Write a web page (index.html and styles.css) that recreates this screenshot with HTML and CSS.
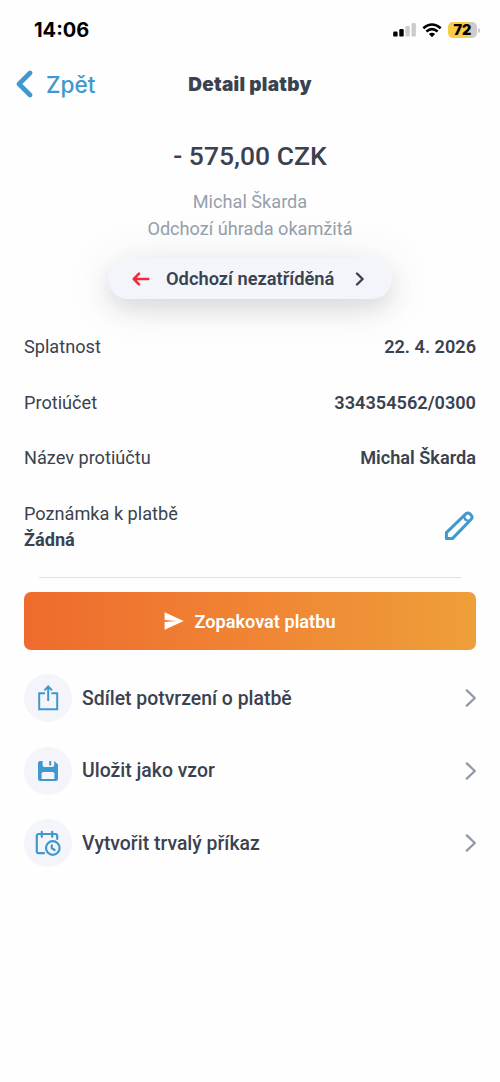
FILE: index.html
```html
<!DOCTYPE html>
<html lang="cs">
<head>
<meta charset="utf-8">
<meta name="viewport" content="width=device-width, initial-scale=1">
<title>Detail platby</title>
<link rel="stylesheet" href="styles.css">
</head>
<body>
<div class="screen">
  <div class="status">
    <span class="clock">14:06</span>
    <div class="indicators">
      <svg class="signal" width="24" height="14" viewBox="0 0 24 14">
        <rect x="0.2" y="8.6" width="4.4" height="5" rx="1.2" fill="#000"/>
        <rect x="6.3" y="6" width="4.4" height="7.6" rx="1.2" fill="#000"/>
        <rect x="12.4" y="3" width="4.4" height="10.6" rx="1.2" fill="#ccc"/>
        <rect x="18.5" y="0" width="4.4" height="13.6" rx="1.2" fill="#ccc"/>
      </svg>
      <svg class="wifi" width="20" height="15" viewBox="0 0 20 15" fill="none" stroke="#000" stroke-width="2.6">
        <path d="M1.3 5.2Q10 -2.2 18.7 5.2"/>
        <path d="M4.4 8.6Q10 3.8 15.6 8.6"/>
        <path d="M10 14.2L6.9 11.1Q10 8.5 13.1 11.1Z" fill="#000" stroke="none"/>
      </svg>
      <div class="battery"><span class="level">72</span></div>
      <span class="battery-tip"></span>
    </div>
  </div>

  <header class="nav">
    <a class="back">
      <svg width="18" height="28" viewBox="0 0 18 28" fill="none" stroke="#4198cf" stroke-width="4.6" stroke-linecap="round" stroke-linejoin="round"><path d="M15 3L4 14L15 25"/></svg>
      <span>Zpět</span>
    </a>
    <h1 class="title">Detail platby</h1>
  </header>

  <section class="summary">
    <div class="amount">- 575,00 CZK</div>
    <div class="party">Michal Škarda</div>
    <div class="kind">Odchozí úhrada okamžitá</div>
    <button class="category">
      <svg width="18" height="14" viewBox="0 0 18 14" fill="none" stroke="#ee2b3b" stroke-width="2.5" stroke-linecap="round" stroke-linejoin="round"><path d="M16.3 7H1.8M7 1.7L1.8 7L7 12.3"/></svg>
      <span class="category-name">Odchozí nezatříděná</span>
      <svg class="category-more" width="10" height="14" viewBox="0 0 10 14" fill="none" stroke="#3a4250" stroke-width="2.4" stroke-linecap="round" stroke-linejoin="round"><path d="M2 1.5L7.6 7L2 12.5"/></svg>
    </button>
  </section>

  <dl class="details">
    <div class="row"><dt>Splatnost</dt><dd>22. 4. 2026</dd></div>
    <div class="row"><dt>Protiúčet</dt><dd>334354562/0300</dd></div>
    <div class="row"><dt>Název protiúčtu</dt><dd>Michal Škarda</dd></div>
  </dl>

  <div class="note">
    <div>
      <div class="note-label">Poznámka k platbě</div>
      <div class="note-value">Žádná</div>
    </div>
    <svg width="30" height="30" viewBox="0 0 30 30" fill="none" stroke="#4198cf" stroke-width="3" stroke-linejoin="round"><path d="M2.4 27.6V21.6L21.8 2.8Q23.9 1.2 25.8 2.9L27.2 4.3Q28.9 6.2 27.2 8.2L8.4 27.6Z"/><path d="M20.1 4.8Q20.2 9.8 25.2 9.9" stroke-width="2.4"/></svg>
  </div>

  <hr class="divider">

  <button class="repeat">
    <svg width="20" height="18" viewBox="0 0 20 18" fill="#fff"><path d="M0.6 0.3L19.7 9L0.6 17.7V10L13 9L0.6 8Z"/></svg>
    <span>Zopakovat platbu</span>
  </button>

  <nav class="actions">
    <a class="action">
      <span class="badge"><svg width="22" height="26" viewBox="0 0 22 26" fill="none" stroke="#4198cf" stroke-width="2"><path d="M8 8.3H2.2V24.2H20.2V8.3H14.4"/><path d="M11.2 16V1.7M7.4 5.4L11.2 1.5L15 5.4"/></svg></span>
      <span class="action-name">Sdílet potvrzení o platbě</span>
      <svg class="chevron" width="12" height="18" viewBox="0 0 12 18"><path d="M1.8 1.4L9.8 9L1.8 16.6"/></svg>
    </a>
    <a class="action">
      <span class="badge"><svg width="20" height="20" viewBox="0 0 20 20"><path fill="#4198cf" fill-rule="evenodd" d="M2 0H4.6V4.2Q4.6 6 6.4 6H14.4Q16.2 6 16.2 4.2V0L20 3.5V18Q20 20 18 20H2Q0 20 0 18V2Q0 0 2 0ZM5.3 11Q3.6 11 3.6 12.5V18H16.4V12.5Q16.4 11 14.7 11Z"/><rect x="11.2" y="0" width="2" height="4.5" fill="#4198cf"/></svg></span>
      <span class="action-name">Uložit jako vzor</span>
      <svg class="chevron" width="12" height="18" viewBox="0 0 12 18"><path d="M1.8 1.4L9.8 9L1.8 16.6"/></svg>
    </a>
    <a class="action">
      <span class="badge"><svg width="26" height="26" viewBox="0 0 26 26" fill="none" stroke="#4198cf" stroke-width="2.2" stroke-linecap="round" stroke-linejoin="round"><path d="M22.2 9V6Q22.2 4 20.2 4H3.8Q1.8 4 1.8 6V21.2Q1.8 23.2 3.8 23.2H9"/><path d="M6.8 1.8V6.8M17.2 1.8V6.8"/><circle cx="17.8" cy="18" r="6.8"/><path d="M16.8 15.4V18.2L19.6 20"/></svg></span>
      <span class="action-name">Vytvořit trvalý příkaz</span>
      <svg class="chevron" width="12" height="18" viewBox="0 0 12 18"><path d="M1.8 1.4L9.8 9L1.8 16.6"/></svg>
    </a>
  </nav>
</div>
</body>
</html>
```
FILE: styles.css
```css
* { box-sizing: border-box; }

body {
  margin: 0;
  background: #fefefe;
  color: #3a4250;
  font-family: Roboto, "Liberation Sans", sans-serif;
  font-size: 18.15px;
}

button { border: 0; font: inherit; color: inherit; }
svg { display: block; flex: none; }

.screen { width: 500px; height: 1082px; overflow: hidden; }

.status {
  height: 60px;
  padding: 0 23px 0 34px;
  display: flex;
  align-items: center;
  justify-content: space-between;
  color: #000;
  font-family: Inter, "Liberation Sans", sans-serif;
}
.clock { font-size: 20px; font-weight: 700; }
.indicators { display: flex; align-items: center; }
.wifi { margin-left: 5px; }
.battery {
  width: 29px;
  height: 16px;
  margin-left: 6px;
  border-radius: 5px;
  background: linear-gradient(90deg, #f8cc46 73%, #ccc 73%);
  display: flex;
  align-items: center;
  justify-content: center;
}
.level { font-size: 14.5px; font-weight: 900; line-height: 16px; }
.battery-tip { width: 2px; height: 5px; margin: 0 -3px 0 1px; border-radius: 0 2px 2px 0; background: #ccc; }

.nav {
  height: 48px;
  padding: 0 15px;
  display: grid;
  grid-template-columns: 1fr auto 1fr;
  align-items: center;
  font-family: Inter, "Liberation Sans", sans-serif;
}
.back { display: flex; align-items: center; gap: 13px; color: #4198cf; font-size: 22.6px; font-weight: 500; }
.title { margin: 0; font-size: 19px; font-weight: 900; letter-spacing: 0.25px; }

.summary {
  height: 216px;
  padding-top: 30px;
  display: flex;
  flex-direction: column;
  align-items: center;
}
.amount { font-size: 26.5px; font-weight: 500; line-height: 36px; }
.party, .kind { color: #96a0ab; line-height: 26.5px; }
.party { margin-top: 15px; }
.category {
  width: 284px;
  height: 41px;
  margin-top: 16px;
  padding: 0 27px 0 24px;
  display: flex;
  align-items: center;
  border-radius: 21px;
  background: #f3f5fa;
  box-shadow: 0 10px 22px rgba(58, 66, 80, 0.14), 0 4px 50px rgba(58, 66, 80, 0.1);
  font-size: 18.3px;
  font-weight: 600;
}
.category-name { margin-left: 16px; }
.category-more { margin-left: auto; }

.details { margin: -5px 24px 0; }
.row { height: 55.6px; display: flex; align-items: center; justify-content: space-between; }
.row dd { margin: 0; font-weight: 600; }

.note {
  height: 91px;
  padding: 15px 26px 0 24px;
  display: flex;
  justify-content: space-between;
  line-height: 26.5px;
}
.note svg { margin-top: 10px; }
.note-value { font-weight: 700; }

.divider { height: 1px; margin: 0 39px; border: 0; background: #dfe1e8; }

.repeat {
  width: 452px;
  height: 58px;
  margin: 14.4px 24px 0;
  padding: 0;
  display: flex;
  align-items: center;
  justify-content: center;
  gap: 10px;
  border-radius: 7px;
  background: linear-gradient(90deg, #ee6b2d, #f08434 50%, #ee9f3a);
  color: #fff;
  font-weight: 600;
}

.actions { padding: 11.6px 23px 0 24px; }
.action { height: 72.5px; display: flex; align-items: center; }
.badge {
  width: 48px;
  height: 48px;
  display: flex;
  align-items: center;
  justify-content: center;
  border-radius: 50%;
  background: #f3f5fa;
}
.action-name { flex: 1; margin-left: 10px; font-size: 19.4px; font-weight: 500; }
.chevron { fill: none; stroke: #9099a5; stroke-width: 2.3; stroke-linecap: round; stroke-linejoin: round; }
```
